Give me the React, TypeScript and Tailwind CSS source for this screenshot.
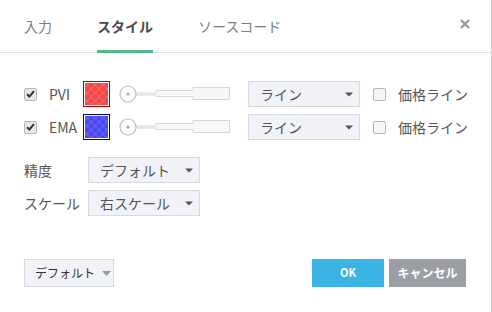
import React, { FC } from 'react';

const font = { fontFamily: '"Noto Sans CJK JP", "Noto Sans", sans-serif' };

const Check: FC<{ checked?: boolean }> = ({ checked }) => (
  <div
    className={`flex h-[13px] w-[13px] shrink-0 items-center justify-center rounded-[2px] border border-[#b4b6bb] ${
      checked ? 'bg-[#e6e7ea]' : 'bg-[#f4f5f7]'
    }`}
  >
    {checked && (
      <svg width="9" height="8" viewBox="0 0 9 8">
        <path d="M1 4.2 L3.4 6.5 L8 1.2" fill="none" stroke="#333" strokeWidth="2" />
      </svg>
    )}
  </div>
);

const Swatch: FC<{ id: string; border: string; a: string; b: string }> = ({ id, border, a, b }) => (
  <div className={`h-[26px] w-[27px] shrink-0 border p-[1px] bg-white ${border}`}>
    <svg width="23" height="22" className="block">
      <defs>
        <pattern id={id} width="8" height="8" patternUnits="userSpaceOnUse">
          <rect width="8" height="8" fill={a} />
          <rect width="4" height="4" fill={b} />
          <rect x="4" y="4" width="4" height="4" fill={b} />
        </pattern>
      </defs>
      <rect width="23" height="22" fill={`url(#${id})`} />
    </svg>
  </div>
);

const Slider: FC = () => (
  <svg width="112" height="26" viewBox="0 0 112 26" className="shrink-0">
    <path
      d="M17 12 H37 V9.5 H74 V6.5 H110.5 V18.5 H74 V15.5 H37 V14 H17 Z"
      fill="#f8f8f9"
      stroke="#d5d7dc"
      strokeWidth="1"
    />
    <circle cx="9" cy="13" r="8" fill="#fff" stroke="#b9bcc4" strokeWidth="1.2" />
    <circle cx="9" cy="13" r="1.6" fill="#a3a6ae" />
  </svg>
);

const Caret: FC = () => (
  <svg width="8" height="5" viewBox="0 0 8 5">
    <path d="M0 0.5 H8 L4 4.5 Z" fill="#555" />
  </svg>
);

const Select: FC<{ label: string; w: string }> = ({ label, w }) => (
  <div
    className={`flex h-[26px] shrink-0 items-center justify-between border border-[#d6d9df] bg-[#f1f3f8] pl-[11px] pr-[6px] text-[14px] text-[#555] ${w}`}
  >
    <span className="leading-none">{label}</span>
    <Caret />
  </div>
);

const PlotRow: FC<{ name: string; swatch: React.ReactNode }> = ({ name, swatch }) => (
  <div className="flex h-[26px] items-center">
    <Check checked />
    <span className="ml-[12px] w-[34px] text-[14px] text-[#555]">{name}</span>
    {swatch}
    <div className="ml-[9px]">
      <Slider />
    </div>
    <div className="ml-[17px]">
      <Select label="ライン" w="w-[112px]" />
    </div>
    <div className="ml-[13px]">
      <Check />
    </div>
    <span className="ml-[12px] text-[14px] text-[#555]">価格ライン</span>
  </div>
);

const App: FC = () => {
  return (
    <div className="h-[312px] w-[492px] border-r border-[#c9cbd0] bg-white" style={font}>
      <div className="flex h-[53px] items-stretch border-b border-[#e0e3e8] pl-[24px] pr-[21px] text-[14px]">
        <div className="flex items-center text-[#7a7d85]">入力</div>
        <div className="relative ml-[45px] flex items-center font-bold text-[#4a4a4a]">
          スタイル
          <div className="absolute bottom-[-1px] left-0 right-0 h-[3px] bg-[#53b987]" />
        </div>
        <div className="ml-[45px] flex items-center text-[#7a7d85]">ソースコード</div>
        <div className="ml-auto flex items-center pb-[5px]">
          <svg width="10" height="10" viewBox="0 0 10 10">
            <path d="M1 1 L9 9 M9 1 L1 9" stroke="#9598a1" strokeWidth="2.2" />
          </svg>
        </div>
      </div>

      <div className="flex flex-col gap-[7px] pl-[24px] pt-[28px]">
        <PlotRow
          name="PVI"
          swatch={<Swatch id="ck1" border="border-[#b00000]" a="#f04848" b="#f45c5c" />}
        />
        <PlotRow
          name="EMA"
          swatch={<Swatch id="ck2" border="border-[#0000b0]" a="#4848f0" b="#5c5cf4" />}
        />
      </div>

      <div className="mt-[17px] flex flex-col gap-[7px] pl-[24px]">
        <div className="flex h-[26px] items-center">
          <span className="w-[64px] text-[14px] text-[#555]">精度</span>
          <Select label="デフォルト" w="w-[112px]" />
        </div>
        <div className="flex h-[26px] items-center">
          <span className="w-[64px] text-[14px] text-[#555]">スケール</span>
          <Select label="右スケール" w="w-[112px]" />
        </div>
      </div>

      <div className="mt-[43px] flex items-center pl-[24px] pr-[25px]">
        <div className="flex h-[28px] w-[90px] items-center gap-[7px] border border-[#d6d9df] bg-[#f1f3f8] pl-[10px] text-[12px] text-[#333]">
          <span>デフォルト</span>
          <svg width="9" height="5" viewBox="0 0 9 5">
            <path d="M0 0 H9 L4.5 5 Z" fill="#9a9ca3" />
          </svg>
        </div>
        <div className="ml-auto flex gap-[5px]">
          <div className="flex h-[28px] w-[72px] items-center justify-center bg-[#3bb3e4] pb-[2px] text-[11px] font-bold text-white">
            OK
          </div>
          <div className="flex h-[28px] w-[77px] items-center justify-center bg-[#9c9ea5] text-[12px] font-bold text-white">
            キャンセル
          </div>
        </div>
      </div>
    </div>
  );
};

export default App;
